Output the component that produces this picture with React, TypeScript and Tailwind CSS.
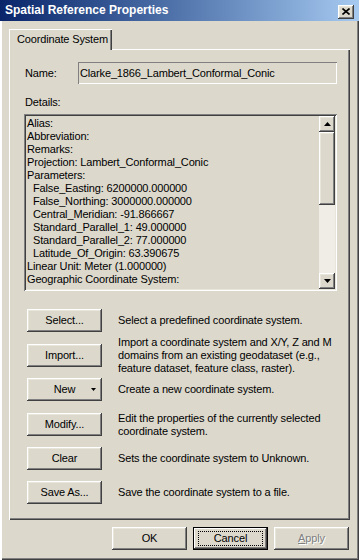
import type { ReactNode } from "react";

const BG = "bg-[#dcd8cc]";
const RAISED =
  "shadow-[inset_-1px_-1px_#404040,inset_1px_1px_#ffffff,inset_-2px_-2px_#808080,inset_2px_2px_#e8e5da]";
const SUNKEN =
  "shadow-[inset_1px_1px_#808080,inset_-1px_-1px_#ffffff,inset_2px_2px_#404040,inset_-2px_-2px_#e8e5da]";

const DETAILS: { text: string; indent?: boolean }[] = [
  { text: "Alias:" },
  { text: "Abbreviation:" },
  { text: "Remarks:" },
  { text: "Projection: Lambert_Conformal_Conic" },
  { text: "Parameters:" },
  { text: "False_Easting: 6200000.000000", indent: true },
  { text: "False_Northing: 3000000.000000", indent: true },
  { text: "Central_Meridian: -91.866667", indent: true },
  { text: "Standard_Parallel_1: 49.000000", indent: true },
  { text: "Standard_Parallel_2: 77.000000", indent: true },
  { text: "Latitude_Of_Origin: 63.390675", indent: true },
  { text: "Linear Unit: Meter (1.000000)" },
  { text: "Geographic Coordinate System:" },
];

const ACTIONS: { label: string; lines: string[]; gap: string; menu?: boolean }[] = [
  { label: "Select...", lines: ["Select a predefined coordinate system."], gap: "mt-[18px]" },
  {
    label: "Import...",
    lines: [
      "Import a coordinate system and X/Y, Z and M",
      "domains from an existing geodataset (e.g.,",
      "feature dataset, feature class, raster).",
    ],
    gap: "mt-[12px]",
  },
  { label: "New", lines: ["Create a new coordinate system."], gap: "mt-[11px]", menu: true },
  {
    label: "Modify...",
    lines: ["Edit the properties of the currently selected", "coordinate system."],
    gap: "mt-[12px]",
  },
  { label: "Clear", lines: ["Sets the coordinate system to Unknown."], gap: "mt-[11px]" },
  { label: "Save As...", lines: ["Save the coordinate system to a file."], gap: "mt-[11px]" },
];

function Btn({ children, className = "" }: { children: ReactNode; className?: string }) {
  return (
    <div
      className={`relative flex h-[23px] w-[75px] shrink-0 items-center justify-center ${BG} ${RAISED} ${className}`}
    >
      {children}
    </div>
  );
}

function Arrow({ down = false }: { down?: boolean }) {
  return (
    <svg width="7" height="4" viewBox="0 0 7 4" className={down ? "rotate-180" : ""}>
      <path d="M3.5 0L7 4H0Z" fill="#000" />
    </svg>
  );
}

function ScrollBar() {
  return (
    <div className="flex h-full w-[16px] shrink-0 flex-col">
      <div className={`flex h-[16px] items-center justify-center ${BG} ${RAISED}`}>
        <Arrow />
      </div>
      <div className={`h-[73px] ${BG} ${RAISED}`} />
      <div className="flex-1 bg-[#efede6]" />
      <div className={`flex h-[16px] items-center justify-center ${BG} ${RAISED}`}>
        <Arrow down />
      </div>
    </div>
  );
}

export default function App() {
  return (
    <div
      className={`relative h-[560px] w-[359px] overflow-hidden ${BG} font-['Liberation_Sans',Arial,sans-serif] text-[11px] leading-[13px] tracking-[-0.15px] text-black shadow-[inset_2px_0_#ffffff,inset_-1px_-1px_#404040,inset_-2px_-2px_#808080]`}
    >
      {/* title bar */}
      <div className="flex h-[21px] items-center justify-between bg-gradient-to-r from-[#0a246a] to-[#a6caf0] pl-[5px] pr-[5px]">
        <span className="text-[12px] font-bold tracking-normal text-white">
          Spatial Reference Properties
        </span>
        <div className={`mt-[2px] flex h-[14px] w-[16px] items-center justify-center ${BG} ${RAISED}`}>
          <svg width="8" height="7" viewBox="0 0 8 7">
            <path d="M0.5 0.5L7.5 6.5M7.5 0.5L0.5 6.5" stroke="#000" strokeWidth="1.6" />
          </svg>
        </div>
      </div>

      <div className="px-[9px] pt-[8px]">
        {/* tab strip */}
        <div className="flex">
          <div
            className={`relative z-10 -mb-px h-[21px] w-[103px] pl-[8px] pt-[4px] ${BG} shadow-[inset_1px_1px_#ffffff,inset_-1px_0_#404040,inset_-2px_0_#808080]`}
          >
            Coordinate System
          </div>
        </div>

        {/* tab panel */}
        <div
          className={`h-[471px] pl-[15px] pr-[13px] pt-[13px] shadow-[inset_1px_1px_#ffffff,inset_-1px_-1px_#404040,inset_-2px_-2px_#808080]`}
        >
          <div className="flex h-[22px] items-center">
            <span className="w-[54px] shrink-0 pl-[1px]">Name:</span>
            <div className="flex h-[22px] flex-1 items-center pl-[2px] shadow-[inset_1px_1px_#808080,inset_-1px_-1px_#ffffff] whitespace-nowrap">
              Clarke_1866_Lambert_Conformal_Conic
            </div>
          </div>

          <div className="mt-[12px] h-[13px] pl-[1px]">Details:</div>

          <div className={`mt-[5px] flex h-[177px] p-[2px] ${SUNKEN}`}>
            <div className="min-w-0 flex-1 overflow-hidden whitespace-nowrap pl-[1px] pt-[1px]">
              {DETAILS.map((d) => (
                <div key={d.text} className={d.indent ? "h-[13px] pl-[6px]" : "h-[13px]"}>
                  {d.text}
                </div>
              ))}
            </div>
            <ScrollBar />
          </div>

          {ACTIONS.map((a) => (
            <div key={a.label} className={`flex h-[23px] items-center ${a.gap}`}>
              <Btn className="ml-[3px]">
                <span>{a.label}</span>
                {a.menu && (
                  <svg
                    width="5"
                    height="3"
                    viewBox="0 0 5 3"
                    className="absolute right-[6px] top-[10px]"
                  >
                    <path d="M0 0H5L2.5 3Z" fill="#000" />
                  </svg>
                )}
              </Btn>
              <div className="ml-[16px] whitespace-nowrap">
                {a.lines.map((l) => (
                  <div key={l}>{l}</div>
                ))}
              </div>
            </div>
          ))}
        </div>

        {/* dialog buttons */}
        <div className="mt-[7px] flex justify-end gap-[6px] pr-[1px]">
          <Btn>OK</Btn>
          <div className="h-[23px] w-[75px] bg-black p-px">
            <div
              className={`flex h-full w-full items-center justify-center ${BG} shadow-[inset_-1px_-1px_#404040,inset_1px_1px_#ffffff,inset_-2px_-2px_#808080]`}
            >
              <div className="flex h-[15px] w-[65px] items-center justify-center border border-dotted border-black">
                Cancel
              </div>
            </div>
          </div>
          <Btn>
            <span className="text-[#808080] [text-shadow:1px_1px_#ffffff]">
              <span className="underline">A</span>pply
            </span>
          </Btn>
        </div>
      </div>
    </div>
  );
}
